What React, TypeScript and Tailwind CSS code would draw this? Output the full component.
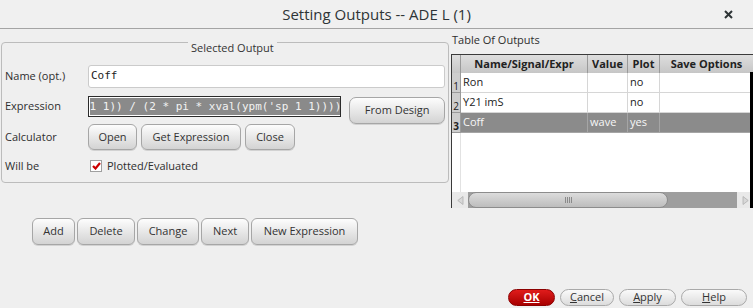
import type { ReactNode } from "react";

const FONT = "font-['Open_Sans','Noto_Sans',sans-serif]";
const MONO = "font-['DejaVu_Sans_Mono','Liberation_Mono',monospace]";

function Btn({ children, className = "" }: { children: ReactNode; className?: string }) {
  return (
    <button
      type="button"
      className={`flex items-center justify-center rounded-[6px] border border-[#a6a6a6] bg-gradient-to-b from-[#fdfdfd] to-[#d3d3d3] text-[11px] text-[#333] shadow-[0_1px_0_rgba(0,0,0,0.12)] ${className}`}
    >
      {children}
    </button>
  );
}

function Pill({ children, className = "" }: { children: ReactNode; className?: string }) {
  return (
    <button
      type="button"
      className={`flex h-[17px] items-center justify-center rounded-full border border-[#a9a9a9] bg-gradient-to-b from-[#fafafa] to-[#dcdcdc] text-[11px] text-[#333] ${className}`}
    >
      {children}
    </button>
  );
}

const rows = [
  { n: "1", name: "Ron", value: "", plot: "no" },
  { n: "2", name: "Y21 imS", value: "", plot: "no" },
  { n: "3", name: "Coff", value: "wave", plot: "yes", selected: true },
];

function OutputsTable() {
  return (
    <div className="relative flex h-[154px] w-[302px] flex-col border-l border-t border-[#3a3a3a] bg-white">
      {/* header */}
      <div className="flex h-[18px] bg-gradient-to-b from-[#dedede] to-[#c6c6c6] text-[11px] font-bold text-[#222]">
        <div className="w-[9px] border-r border-[#9a9a9a]" />
        <div className="flex w-[127px] items-center justify-center border-r border-[#9a9a9a]">Name/Signal/Expr</div>
        <div className="flex w-[40px] items-center justify-center border-r border-[#9a9a9a]">Value</div>
        <div className="flex w-[32px] items-center justify-center border-r border-[#9a9a9a]">Plot</div>
        <div className="flex flex-1 items-center justify-center">Save Options</div>
      </div>
      {rows.map((r) => {
        const line = r.selected ? "border-[#a5a5a5]" : "border-[#d6d6d6]";
        return (
          <div
            key={r.n}
            className={`flex h-[20px] text-[11px] ${r.selected ? "bg-[#8b8b8b] text-[#f7f7f7]" : "text-[#222]"}`}
          >
            <div
              className={`flex w-[9px] items-end justify-center border-b border-r border-[#9a9a9a] bg-[#cdcdcd] pb-[1px] text-[10px] leading-none text-[#222] ${r.selected ? "font-bold" : ""}`}
            >
              {r.n}
            </div>
            <div className={`flex w-[127px] items-center border-b border-r pb-[1px] pl-[2px] ${line}`}>{r.name}</div>
            <div className={`flex w-[40px] items-center border-b border-r pb-[1px] pl-[2px] ${line}`}>{r.value}</div>
            <div className={`flex w-[32px] items-center border-b border-r pl-[2px] ${line}`}>{r.plot}</div>
            <div className={`flex-1 border-b ${line}`} />
          </div>
        );
      })}
      <div className="flex flex-1">
        <div className="w-[9px] border-r border-[#e2e2e2]" />
      </div>
      {/* horizontal scrollbar */}
      <div className="flex h-[16px] items-stretch bg-[#9e9e9e]">
        <div className="flex w-[16px] items-center justify-center bg-[#e9e9e9]">
          <svg width="7" height="9" viewBox="0 0 7 9">
            <path d="M6 0.5 L0.8 4.5 L6 8.5 Z" fill="#d8d8d8" stroke="#b0b0b0" strokeWidth="0.8" />
          </svg>
        </div>
        <div className="flex w-[200px] items-center justify-center rounded-full border border-[#8c8c8c] bg-gradient-to-b from-[#dcdcdc] to-[#bdbdbd]">
          <div className="flex gap-[1px]">
            <span className="h-[6px] w-[1px] bg-[#8a8a8a]" />
            <span className="h-[6px] w-[1px] bg-[#8a8a8a]" />
            <span className="h-[6px] w-[1px] bg-[#8a8a8a]" />
            <span className="h-[6px] w-[1px] bg-[#8a8a8a]" />
          </div>
        </div>
        <div className="flex-1" />
        <div className="flex w-[16px] items-center justify-center bg-[#e9e9e9]">
          <svg width="7" height="9" viewBox="0 0 7 9">
            <path d="M1 0.5 L6.2 4.5 L1 8.5 Z" fill="#d8d8d8" stroke="#b0b0b0" strokeWidth="0.8" />
          </svg>
        </div>
      </div>
      <div className="absolute right-0 top-[17px] h-[136px] w-[3px] bg-black" />
    </div>
  );
}

export default function App() {
  return (
    <div className={`flex h-[308px] w-[753px] flex-col overflow-hidden bg-[#efefef] ${FONT}`}>
      {/* title bar */}
      <div className="relative flex h-[29px] shrink-0 items-center justify-center border-b border-[#a4a4a4] bg-[#f0f0f0]">
        <span className="text-[15px] font-medium text-[#2e3436]">Setting Outputs -- ADE L (1)</span>
        <svg className="absolute right-[20px] top-[10px]" width="9" height="9" viewBox="0 0 9 9">
          <path d="M1 1 L8 8 M8 1 L1 8" stroke="#2e3436" strokeWidth="2" />
        </svg>
      </div>

      <div className="flex">
        {/* left column */}
        <div className="flex w-[450px] flex-col pl-[1px] pt-[13px]">
          <div className="relative h-[141px] w-[448px] rounded-[4px] border border-[#bcbcbc] px-[3px]">
            <span className="absolute left-[186px] top-[-1px] bg-[#efefef] px-[3px] text-[11px] leading-[11px] text-[#333]">
              Selected Output
            </span>
            {/* name */}
            <div className="mt-[22px] flex h-[23px] items-center">
              <span className="w-[83px] text-[11px] text-[#2e2e2e]">Name (opt.)</span>
              <div className={`flex h-[23px] w-[357px] items-center rounded-[3px] border border-[#cbcbcb] bg-white pl-[2px] text-[11px] text-[#222] ${MONO}`}>
                Coff
              </div>
            </div>
            {/* expression */}
            <div className="mt-[8px] flex h-[28px] items-start">
              <span className="flex h-[21px] w-[83px] items-center text-[11px] text-[#2e2e2e]">Expression</span>
              <div className={`flex h-[21px] w-[255px] items-center overflow-hidden border border-[#2b2b2b] bg-white pl-[1px] text-[11px] ${MONO}`}>
                <span className="whitespace-pre bg-[#8a8a8a] leading-[17px] text-[#f2f2f2]">1 1)) / (2 * pi * xval(ypm('sp 1 1))))</span>
                <span className="ml-[1px] h-[15px] w-[1px] bg-[#111]" />
              </div>
              <Btn className="ml-[8px] mt-[1px] h-[27px] w-[96px] rounded-[7px]">From Design</Btn>
            </div>
            {/* calculator */}
            <div className="flex h-[26px] items-center">
              <span className="w-[83px] text-[11px] text-[#2e2e2e]">Calculator</span>
              <div className="flex gap-[4px]">
                <Btn className="h-[26px] w-[49px]">Open</Btn>
                <Btn className="h-[26px] w-[100px]">Get Expression</Btn>
                <Btn className="h-[26px] w-[50px]">Close</Btn>
              </div>
            </div>
            {/* will be */}
            <div className="mt-[10px] flex h-[12px] items-center">
              <span className="w-[85px] text-[11px] text-[#2e2e2e]">Will be</span>
              <span className="flex h-[12px] w-[12px] items-center justify-center border border-[#a0a0a0] bg-white">
                <svg width="9" height="8" viewBox="0 0 9 8">
                  <path d="M1 4 L3.5 6.5 L8 1" fill="none" stroke="#cc0000" strokeWidth="2.2" />
                </svg>
              </span>
              <span className="ml-[5px] text-[11px] text-[#2e2e2e]">Plotted/Evaluated</span>
            </div>
          </div>

          <div className="ml-[31px] mt-[35px] flex gap-[2px]">
            <Btn className="h-[27px] w-[43px]">Add</Btn>
            <Btn className="h-[27px] w-[58px]">Delete</Btn>
            <Btn className="h-[27px] w-[62px]">Change</Btn>
            <Btn className="h-[27px] w-[48px]">Next</Btn>
            <Btn className="h-[27px] w-[107px]">New Expression</Btn>
          </div>
        </div>

        {/* right column */}
        <div className="ml-[1px] flex flex-col pt-[4px]">
          <span className="pl-[1px] text-[11px] leading-[14px] text-[#2e2e2e]">Table Of Outputs</span>
          <div className="mt-[7px]">
            <OutputsTable />
          </div>
        </div>
      </div>

      {/* dialog buttons */}
      <div className="mt-auto flex justify-end gap-[5px] pb-[2px] pr-[6px]">
        <button
          type="button"
          className="flex h-[17px] w-[47px] items-center justify-center rounded-full border border-[#8b0000] bg-gradient-to-b from-[#e01b1b] to-[#a80000] text-[11px] font-bold text-white"
        >
          <span className="underline">OK</span>
        </button>
        <Pill className="w-[54px]">
          <span>
            <span className="underline">C</span>ancel
          </span>
        </Pill>
        <Pill className="w-[57px]">
          <span>
            <span className="underline">A</span>pply
          </span>
        </Pill>
        <Pill className="w-[66px]">
          <span>
            <span className="underline">H</span>elp
          </span>
        </Pill>
      </div>
    </div>
  );
}
